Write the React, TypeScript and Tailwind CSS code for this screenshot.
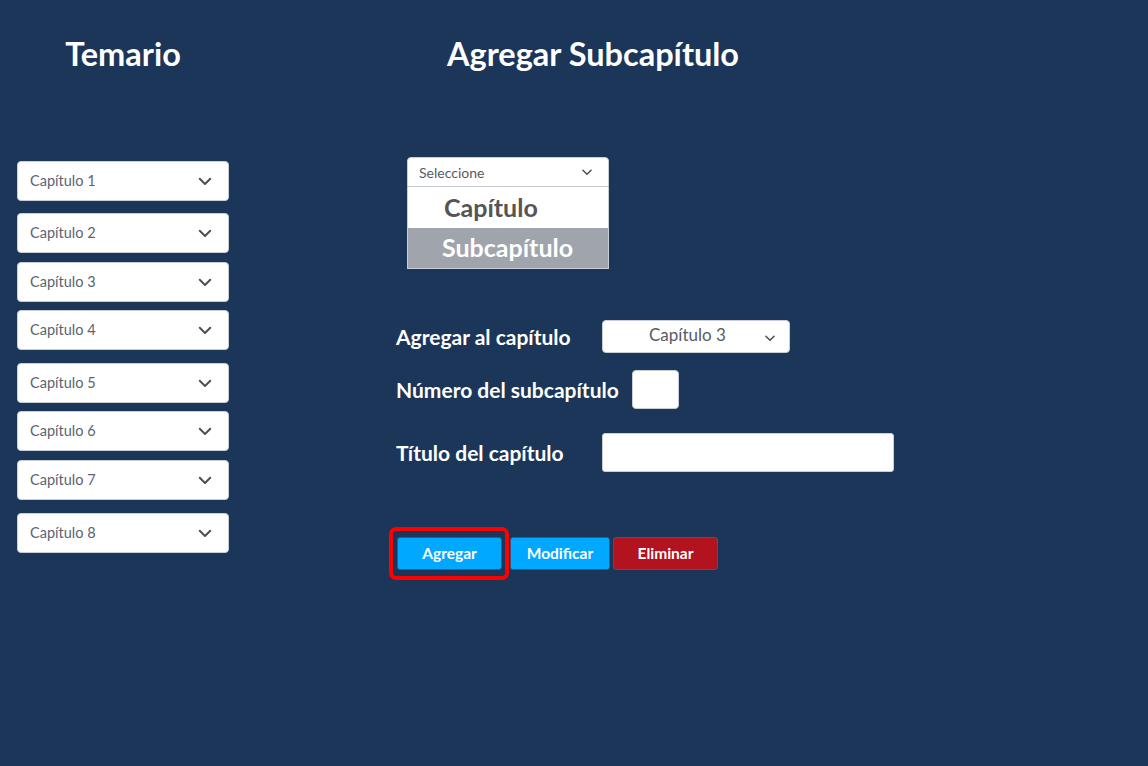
import React from "react";

const Chevron = ({ className = "" }: { className?: string }) => (
  <svg viewBox="0 0 24 24" className={className} fill="none" stroke="currentColor" strokeWidth={2.6} strokeLinecap="round" strokeLinejoin="round">
    <path d="M5 9l7 7 7-7" />
  </svg>
);

const chapters: { label: string; mt: string }[] = [
  { label: "Capítulo 1", mt: "mt-0" },
  { label: "Capítulo 2", mt: "mt-[12px]" },
  { label: "Capítulo 3", mt: "mt-[9px]" },
  { label: "Capítulo 4", mt: "mt-[8px]" },
  { label: "Capítulo 5", mt: "mt-[13px]" },
  { label: "Capítulo 6", mt: "mt-[8px]" },
  { label: "Capítulo 7", mt: "mt-[9px]" },
  { label: "Capítulo 8", mt: "mt-[13px]" },
];

export default function App() {
  return (
    <div
      className="flex h-[766px] w-full overflow-hidden bg-[#1b3658]"
      style={{ fontFamily: "Lato, 'Open Sans', sans-serif" }}
    >
      {/* Left column */}
      <div className="ml-[17px] flex w-[212px] flex-col">
        <h1 className="mt-[34px] text-center text-[32.5px] font-bold leading-[40px] text-white">Temario</h1>
        <div className="mt-[87px] flex flex-col">
          {chapters.map((c) => (
            <div
              key={c.label}
              className={`${c.mt} flex h-[40px] items-center justify-between rounded-[4px] border border-[#c9ced6] bg-white pb-[1px] pl-[12px] pr-[14px]`}
            >
              <span className="text-[14.5px] text-[#5b6472]">{c.label}</span>
              <Chevron className="h-[18px] w-[18px] text-[#4a4f57]" />
            </div>
          ))}
        </div>
      </div>

      {/* Right column */}
      <div className="ml-[167px] flex w-[520px] flex-col">
        <h1 className="mt-[34px] w-[394px] text-center text-[32.5px] font-bold leading-[40px] text-white">
          Agregar Subcapítulo
        </h1>

        <div className="ml-[11px] mt-[83px] w-[202px]">
          <div className="flex h-[30px] items-center justify-between rounded-t-[4px] border border-[#c9ced6] bg-white pl-[11px] pr-[14px]">
            <span className="text-[14px] text-[#555c66]">Seleccione</span>
            <Chevron className="h-[14px] w-[14px] text-[#4a4f57]" />
          </div>
          <div className="border border-t-0 border-[#c9ced6] bg-white">
            <div className="flex h-[41px] items-center pl-[36px] text-[25px] font-bold text-[#555555]">Capítulo</div>
            <div className="flex h-[40px] items-center bg-[#a0a4ad] pl-[34px] text-[25px] font-bold text-white">Subcapítulo</div>
          </div>
        </div>

        <div className="mt-[51px] flex items-center">
          <span className="w-[206px] text-[21px] font-bold text-white">Agregar al capítulo</span>
          <div className="flex h-[33px] w-[188px] items-center justify-between rounded-[4px] border border-[#c9ced6] bg-white pb-[3px] pl-[46px] pr-[12px]">
            <span className="text-[17px] text-[#555c66]">Capítulo 3</span>
            <Chevron className="mt-[5px] h-[14px] w-[14px] text-[#4a4f57]" />
          </div>
        </div>

        <div className="mt-[17px] flex items-center gap-[13px]">
          <span className="text-[21px] font-bold text-white">Número del subcapítulo</span>
          <div className="h-[39px] w-[47px] rounded-[4px] border border-[#c9ced6] bg-white" />
        </div>

        <div className="mt-[24px] flex items-center">
          <span className="w-[206px] text-[21px] font-bold text-white">Título del capítulo</span>
          <div className="h-[39px] w-[292px] rounded-[3px] border border-[#c9ced6] bg-white" />
        </div>

        <div className="mt-[65px] ml-[1px] flex items-center">
          <div className="relative">
            <button className="h-[33px] w-[105px] rounded-[3px] border border-[#3d5878] bg-[#00a8ff] text-[15.5px] font-bold text-white">
              Agregar
            </button>
            <span className="pointer-events-none absolute -bottom-[10px] -left-[8px] -right-[7px] -top-[10px] rounded-[7px] border-4 border-[#ff0000]" />
          </div>
          <button className="ml-[8px] h-[33px] w-[100px] rounded-[3px] border border-[#3d5878] bg-[#00a8ff] text-[15.5px] font-bold text-white">
            Modificar
          </button>
          <button className="ml-[3px] h-[33px] w-[105px] rounded-[3px] border border-[#3d5878] bg-[#b3121f] text-[15.5px] font-bold text-white">
            Eliminar
          </button>
        </div>
      </div>
    </div>
  );
}
